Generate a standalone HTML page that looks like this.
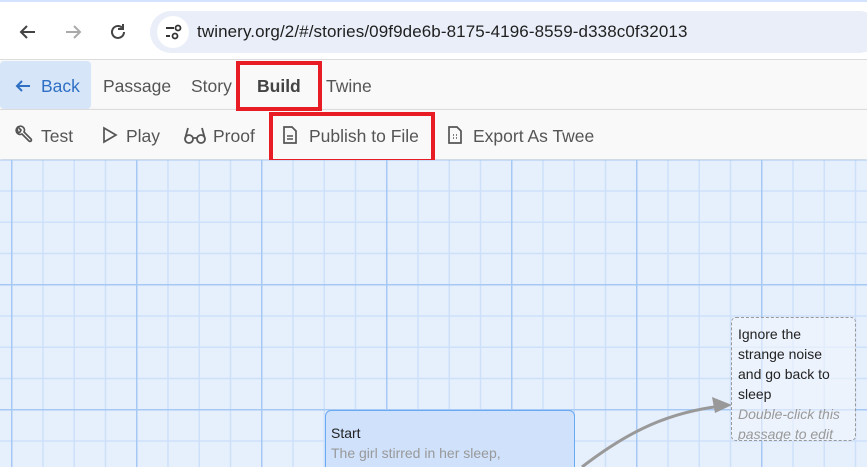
<!DOCTYPE html>
<html><head><meta charset="utf-8"><style>
*{margin:0;padding:0;box-sizing:border-box}
html,body{width:867px;height:467px;overflow:hidden}
body{position:relative;font-family:"Liberation Sans",sans-serif;background:#e6effc}
.grid{position:absolute;left:0;top:160px;width:867px;height:307px;
background-color:#e6effc;
background-image:
linear-gradient(to right,#a5c8f5 0 1.5px,transparent 1.5px),
linear-gradient(to bottom,#a5c8f5 0 1.5px,transparent 1.5px),
linear-gradient(to right,#cde0fa 0 1.5px,transparent 1.5px),
linear-gradient(to bottom,#cde0fa 0 1.5px,transparent 1.5px);
background-size:125px 125px,125px 125px,31.25px 31.25px,31.25px 31.25px;
background-position:11px -1px,11px -1px,11px -1px,11px -1px}
.chrome{position:absolute;left:0;top:0;width:867px;height:59px;background:#fff;border-top:2px solid #d3e3fd}
.url{position:absolute;left:150px;top:9px;width:730px;height:42px;border-radius:21px;background:#e9eef8}
.url .ic{position:absolute;left:7px;top:5px;width:32px;height:32px;border-radius:16px;background:#fff}
.url span{position:absolute;left:47px;top:11px;font-size:17px;color:#1f1f1f;letter-spacing:0.1px}
.bar{position:absolute;left:0;width:867px;height:50px;background:#f9f9f9;border-top:1px solid #dcdcdc}
.t{position:absolute;font-size:17.5px;color:#555}
.back{position:absolute;left:0;top:61px;width:91px;height:48px;background:#d6e6f8;border-radius:4px}
.red{position:absolute;border:4px solid #e81c24}
.p{position:absolute;font-family:"Liberation Sans",sans-serif;font-size:14px;line-height:20px}
</style></head><body>
<div class="chrome">
<svg style="position:absolute;left:16px;top:18px" width="24" height="24" viewBox="0 0 24 24"><path d="M19 12H5M11 6l-6 6 6 6" stroke="#444" stroke-width="2" fill="none"/></svg>
<svg style="position:absolute;left:61px;top:18px" width="24" height="24" viewBox="0 0 24 24"><path d="M5 12h14M13 6l6 6-6 6" stroke="#aaa" stroke-width="2" fill="none"/></svg>
<svg style="position:absolute;left:106px;top:18px" width="24" height="24" viewBox="0 0 24 24"><path d="M18 12a6 6 0 1 1-2-4.5" stroke="#444" stroke-width="2" fill="none"/><path d="M17 4v5h-5" stroke="#444" stroke-width="2" fill="none"/></svg>
<div class="url"><div class="ic"><svg width="32" height="32" viewBox="0 0 32 32"><path d="M9 12h8M9 20h4" stroke="#333" stroke-width="2"/><circle cx="21" cy="12" r="2.5" stroke="#333" stroke-width="1.8" fill="none"/><circle cx="18" cy="20" r="2.5" stroke="#333" stroke-width="1.8" fill="none"/></svg></div><span>twinery.org/2/#/stories/09f9de6b-8175-4196-8559-d338c0f32013</span></div>
</div>
<div class="bar" style="top:59px"></div>
<div class="bar" style="top:109px;box-shadow:0 2px 4px rgba(0,0,0,.12)"></div>
<div class="back"></div>
<svg style="position:absolute;left:14px;top:77px" width="18" height="18" viewBox="0 0 18 18"><path d="M16 9H3M8 4L3 9l5 5" stroke="#2f6fc4" stroke-width="2" fill="none"/></svg>
<div class="t" style="left:41px;top:76px;color:#2f6fc4">Back</div>
<div class="t" style="left:103px;top:76px">Passage</div>
<div class="t" style="left:191px;top:76px">Story</div>
<div class="t" style="left:257px;top:76px;font-weight:bold;color:#444">Build</div>
<div class="t" style="left:326px;top:76px">Twine</div>
<svg style="position:absolute;left:13px;top:125px" width="20" height="20" viewBox="0 0 20 20"><path d="M4 3a4 4 0 0 0 5 6l7 7a1.4 1.4 0 0 0 2-2l-7-7a4 4 0 0 0-6-5l3 3-1 2-2 1z" stroke="#555" stroke-width="1.7" fill="none"/></svg>
<div class="t" style="left:41px;top:126px">Test</div>
<svg style="position:absolute;left:101px;top:126px" width="18" height="18" viewBox="0 0 18 18"><path d="M3 2l12 7-12 7z" stroke="#555" stroke-width="1.7" fill="none"/></svg>
<div class="t" style="left:126px;top:126px">Play</div>
<svg style="position:absolute;left:183px;top:125px" width="24" height="20" viewBox="0 0 24 20"><circle cx="6" cy="14" r="4" stroke="#555" stroke-width="1.8" fill="none"/><circle cx="18" cy="14" r="4" stroke="#555" stroke-width="1.8" fill="none"/><path d="M2 14L5 3M22 14L19 3M10 13h4" stroke="#555" stroke-width="1.8" fill="none"/></svg>
<div class="t" style="left:213px;top:126px">Proof</div>
<svg style="position:absolute;left:282px;top:125px" width="16" height="20" viewBox="0 0 16 20"><path d="M2 2h8l4 4v12H2z" stroke="#555" stroke-width="1.7" fill="none"/><path d="M5 11h6M5 14h6" stroke="#555" stroke-width="1.5"/></svg>
<div class="t" style="left:309px;top:126px">Publish to File</div>
<svg style="position:absolute;left:447px;top:125px" width="16" height="20" viewBox="0 0 16 20"><path d="M2 2h8l4 4v12H2z" stroke="#555" stroke-width="1.7" fill="none"/><path d="M6 10h1M9 10h1M6 13h1M9 13h1" stroke="#555" stroke-width="1.6"/></svg>
<div class="t" style="left:473px;top:126px">Export As Twee</div>
<div class="red" style="left:236px;top:61px;width:86px;height:50px"></div>
<div class="red" style="left:269px;top:112px;width:166px;height:51px"></div>
<div class="grid"></div>
<svg style="position:absolute;left:0;top:0" width="867" height="467"><path d="M582 467C630 430 670 412 722 406" stroke="#999" stroke-width="3" fill="none"/><path d="M732 405l-20-8 3 16z" fill="#999"/></svg>
<div style="position:absolute;left:325px;top:410px;width:250px;height:70px;background:#cfe1fb;border:1px solid #6aaaf2;border-radius:6px"></div>
<div class="p" style="left:331px;top:423px;color:#222">Start</div>
<div class="p" style="left:331px;top:443px;color:#999">The girl stirred in her sleep,</div>
<div style="position:absolute;left:731px;top:317px;width:125px;height:124px;border:1px dashed #999;border-radius:5px;background:rgba(240,245,253,.6)"></div>
<div class="p" style="left:738px;top:324px;color:#222;width:102px">Ignore the strange noise and go back to sleep</div>
<div class="p" style="left:738px;top:404px;color:#999;font-style:italic;width:120px;height:36px;overflow:hidden">Double-click this passage to edit</div>
</body></html>
